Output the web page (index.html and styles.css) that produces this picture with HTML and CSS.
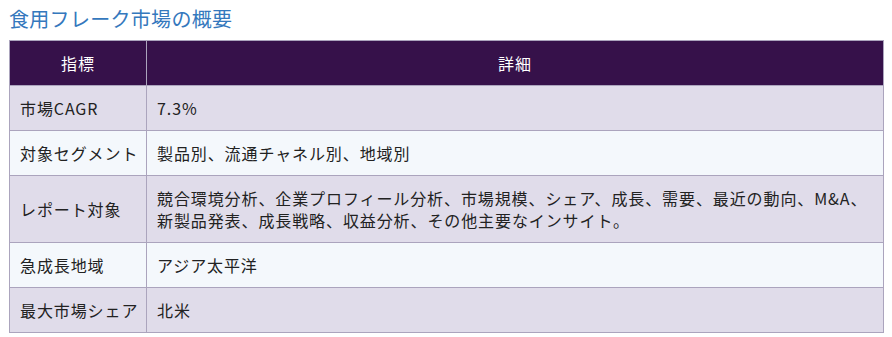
FILE: index.html
```html
<!DOCTYPE html>
<html lang="ja">
<head>
<meta charset="utf-8">
<link rel="stylesheet" href="styles.css">
</head>
<body>
<h2 class="title">食用フレーク市場の概要</h2>
<table class="overview">
  <thead>
    <tr><th class="col-key">指標</th><th>詳細</th></tr>
  </thead>
  <tbody>
    <tr class="odd"><td class="key">市場CAGR</td><td>7.3%</td></tr>
    <tr class="even"><td class="key">対象セグメント</td><td>製品別、流通チャネル別、地域別</td></tr>
    <tr class="odd"><td class="key">レポート対象</td><td>競合環境分析、企業プロフィール分析、市場規模、シェア、成長、需要、最近の動向、M&amp;A、新製品発表、成長戦略、収益分析、その他主要なインサイト。</td></tr>
    <tr class="even"><td class="key">急成長地域</td><td>アジア太平洋</td></tr>
    <tr class="odd"><td class="key">最大市場シェア</td><td>北米</td></tr>
  </tbody>
</table>
</body>
</html>
```
FILE: styles.css
```css
html, body {
  margin: 0;
  padding: 0;
  background: #ffffff;
}
body {
  padding: 7px 9px 0 9px;
  font-family: "Noto Sans CJK JP", "Noto Sans", sans-serif;
  color: #222222;
}
.title {
  margin: 0 0 9px 0;
  font-size: 20px;
  font-weight: normal;
  line-height: 24px;
  letter-spacing: 0.3px;
  color: #3478bd;
}
.overview {
  width: 875px;
  table-layout: fixed;
  border-collapse: collapse;
  font-size: 16px;
  line-height: 22px;
  letter-spacing: 0.9px;
}
.overview th, .overview td {
  border: 1px solid #aba4bd;
  padding: 11px 10px;
  text-align: left;
  vertical-align: middle;
}
.overview th {
  background: #36114a;
  color: #ffffff;
  font-weight: normal;
  text-align: center;
}
.overview .col-key {
  width: 116px;
}
.overview .key {
  white-space: nowrap;
}
.overview tr.odd td {
  background: #e0dcea;
}
.overview tr.even td {
  background: #f4f8fc;
}
```
